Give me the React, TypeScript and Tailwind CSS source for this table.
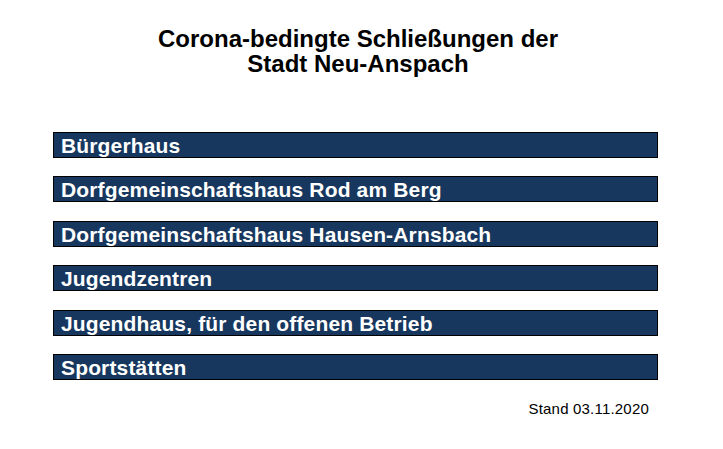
const closures = [
  "Bürgerhaus",
  "Dorfgemeinschaftshaus Rod am Berg",
  "Dorfgemeinschaftshaus Hausen-Arnsbach",
  "Jugendzentren",
  "Jugendhaus, für den offenen Betrieb",
  "Sportstätten",
]

export default function App() {
  return (
    <div className="w-[723px] h-[449px] bg-white font-['Liberation_Sans',Arial,sans-serif]">
      <div className="ml-[53px] w-[605px] flex flex-col">
        <h1 className="pt-[26px] pl-[5px] text-center text-[24px] leading-[25px] font-bold text-black">
          Corona-bedingte Schließungen der
          <br />
          Stadt Neu-Anspach
        </h1>

        <div className="mt-[56px] flex flex-col gap-[18.4px]">
          {closures.map((item) => (
            <div
              key={item}
              className="h-[26px] border border-black bg-[#17375e] pl-[7px] text-[21px] leading-[26px] tracking-[0.15px] font-bold text-white"
            >
              {item}
            </div>
          ))}
        </div>

        <p className="mt-[20px] pr-[9px] text-right text-[15px] leading-[17px] tracking-[0.2px] text-black">
          Stand 03.11.2020
        </p>
      </div>
    </div>
  )
}
